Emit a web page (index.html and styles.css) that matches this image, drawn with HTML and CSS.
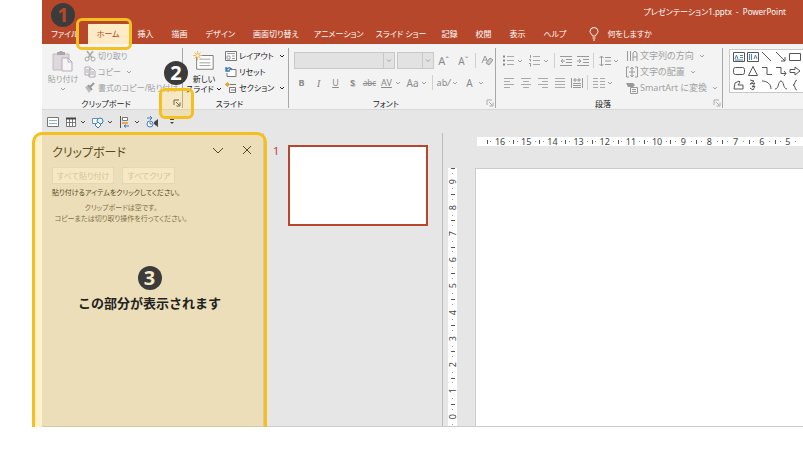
FILE: index.html
```html
<!DOCTYPE html>
<html lang="ja">
<head>
    <meta charset="UTF-8">
    <meta name="viewport" content="width=device-width, initial-scale=1.0">
    <title>プレゼンテーション1.pptx - PowerPoint</title>
    <link rel="stylesheet" href="styles.css">
</head>
<body>
    <!-- icon sprites -->
    <svg class="sprites" aria-hidden="true">
        <symbol id="chev" viewBox="0 0 6 6"><path d="M1 2l2 2 2-2" fill="none" stroke="currentColor"/></symbol>
        <symbol id="launch" viewBox="0 0 8 8"><path d="M1 6V1h5M3 3l3 3M7 3.500V7H3.500" fill="none" stroke="currentColor"/></symbol>
        <symbol id="paste" viewBox="0 0 22 22"><path d="M1 4h16v16H1z" fill="#dcd8dc" stroke="#c2bcc2"/><path d="M5 5V2h2l1-1h2l1 1h2v3z" fill="#aaa6aa"/><path d="M10 8h6l4 4v9H10z" fill="#f7f4f7" stroke="#b5aeb5"/><path d="M16 8v4h4" fill="none" stroke="#b5aeb5"/></symbol>
        <symbol id="cut" viewBox="0 0 12 12"><path d="M3 1l5 7M9 1L4 8" stroke="#aaa" stroke-width="1.500"/><circle cx="3" cy="9" r="2" fill="none" stroke="#aaa"/><circle cx="9" cy="9" r="2" fill="none" stroke="#aaa"/></symbol>
        <symbol id="copy" viewBox="0 0 12 12"><path d="M1 1h5v8H1zM5 3h4l2 2v6H5z" fill="#f3f3f3" stroke="#b2acb2"/><path d="M2 4h2M2 6h2M7 6h3M7 8h3" stroke="#b2acb2"/></symbol>
        <symbol id="brush" viewBox="0 0 12 12"><path d="M1 5l4-2 3 4-3 4z" fill="#bbb"/><path d="M6 5l4-4M4 3l4 5" stroke="#999" stroke-width="2"/></symbol>
        <symbol id="newslide" viewBox="0 0 24 22"><path d="M4 5h18v15H4z" fill="#fff" stroke="#777"/><path d="M7 9h12M7 13h12M7 16h12" stroke="#999"/><path d="M5 0v10M0 5h10M1.500 1.500l7 7M8.500 1.500l-7 7" stroke="#eeb85f"/><circle cx="5" cy="5" r="2" fill="#fff6dc" stroke="#eeb85f"/></symbol>
        <symbol id="layout" viewBox="0 0 12 12"><path d="M.5 1.500h11v9H.5z" fill="#fff" stroke="#777"/><path d="M2 3.500h8M2 6h3v3H2zM7 6h3M7 8.500h3" fill="none" stroke="#999"/></symbol>
        <symbol id="reset" viewBox="0 0 12 12"><path d="M4 3.500h7v7H2V7" fill="#fff" stroke="#777"/><path d="M1 1v4h4M1 5c1-4 5-4 6-1" fill="none" stroke="#2e76b5" stroke-width="1.300"/></symbol>
        <symbol id="section" viewBox="0 0 12 12"><path d="M5 2.500h6M4.500 5.500h6v5h-6zM6 8h4" fill="#fff" stroke="#777"/><path d="M2.500 0v5M0 2.500h5M1 1l3 3M4 1L1 4" stroke="#e8a33d"/></symbol>
        <symbol id="eraser" viewBox="0 0 12 12"><path d="M1 8l3-7 3 6M2 5h4" fill="none" stroke="#999"/><path d="M5 8l4-5 3 2-4 5z" fill="#ccc" stroke="#999"/></symbol>
        <symbol id="bullets" viewBox="0 0 12 12"><path d="M4 1.500h7M4 5.500h7M4 9.500h7" stroke="#aaa"/><path d="M0 1.500h2M0 5.500h2M0 9.500h2" stroke="#888" stroke-width="2"/></symbol>
        <symbol id="numbers" viewBox="0 0 12 12"><path d="M4 1.500h7M4 5.500h7M4 9.500h7" stroke="#aaa"/><path d="M1.500 0v3M0 4.500h1.500v2M0 8.500h1.500v3" fill="none" stroke="#999"/></symbol>
        <symbol id="outdent" viewBox="0 0 12 12"><path d="M0 1.500h12M6 4.500h6M6 7.500h6M0 10.500h12M5 6H1M3 4L1 6l2 2" fill="none" stroke="#999"/></symbol>
        <symbol id="indent" viewBox="0 0 12 12"><path d="M0 1.500h12M6 4.500h6M6 7.500h6M0 10.500h12M0 6h4M2 4l2 2-2 2" fill="none" stroke="#999"/></symbol>
        <symbol id="spacing" viewBox="0 0 12 12"><path d="M6 2.500h6M6 6h6M6 9.500h6M2.500 1v10M.5 3l2-2 2 2M.5 9l2 2 2-2" fill="none" stroke="#999"/></symbol>
        <symbol id="left" viewBox="0 0 12 12"><path d="M1 1.500h10M1 4.500h6M1 7.500h10M1 10.500h6" stroke="#aaa"/></symbol>
        <symbol id="center" viewBox="0 0 12 12"><path d="M1 1.500h10M3 4.500h6M1 7.500h10M3 10.500h6" stroke="#aaa"/></symbol>
        <symbol id="right" viewBox="0 0 12 12"><path d="M1 1.500h10M5 4.500h6M1 7.500h10M5 10.500h6" stroke="#aaa"/></symbol>
        <symbol id="justify" viewBox="0 0 12 12"><path d="M1 1.500h10M1 4.500h10M1 7.500h10M1 10.500h10" stroke="#aaa"/></symbol>
        <symbol id="distribute" viewBox="0 0 12 12"><path d="M.5 1v10M11.500 1v10M2 6.500h8M2 8.500h8M2 10.500h8M4 1v4M8 1v4M2 3h8" stroke="#999"/></symbol>
        <symbol id="columns" viewBox="0 0 12 12"><path d="M0 1.500h5M0 4.500h5M0 7.500h5M0 10.500h5M7 1.500h5M7 4.500h5M7 7.500h5M7 10.500h5" stroke="#aaa"/></symbol>
        <symbol id="direction" viewBox="0 0 12 12"><path d="M1.500 1v10M4.500 1v10M7 11V3l2-2 2 2v8M7 7h4" fill="none" stroke="#999"/></symbol>
        <symbol id="valign" viewBox="0 0 12 12"><path d="M3 1H.5v10H3M9 1h2.500v10H9M6 1v10M4.500 3L6 1l1.500 2M4.500 9L6 11l1.500-2M3 6h6" fill="none" stroke="#999"/></symbol>
        <symbol id="smartart" viewBox="0 0 12 12"><path d="M0 1h7l2 2-2 2H2z" fill="#999"/><path d="M4.500 5.500h7v6h-7zM6 7.500h4M6 9.500h4" fill="#f3f3f3" stroke="#999"/></symbol>
        <symbol id="bulb" viewBox="0 0 10 14"><path d="M3.500 9C3.500 7.500 1 6.500 1 4.500a4 4 0 018 0C9 6.500 6.500 7.500 6.500 9zM3.500 11h3M4 13h2" fill="none" stroke="#fff"/></symbol>
        <symbol id="qslide" viewBox="0 0 12 12"><path d="M.5 1.500h11v9H.5z" fill="#fff" stroke="#777"/><path d="M2 4.500h8M2 7.500h8" stroke="#8fb0cf"/></symbol>
        <symbol id="qtable" viewBox="0 0 12 12"><path d="M1.500 2.500h9v8h-9zM4.500 3v7M7.500 3v7M2 6.500h8" fill="#fff" stroke="#777"/><path d="M1 2.500h10" stroke="#444" stroke-width="2"/></symbol>
        <symbol id="qshapes" viewBox="0 0 12 12"><path d="M.5 2.500h6v5h-6z" fill="#fff" stroke="#5b8fc0"/><circle cx="8" cy="5" r="3" fill="#eaf2fa" stroke="#3c7fbd"/><path d="M6 6l3 3-3 3-3-3z" fill="#fff" stroke="#3c7fbd"/></symbol>
        <symbol id="qalign" viewBox="0 0 12 12"><path d="M1.500 0v12" stroke="#555"/><path d="M3.500 1.500h5v3h-5z" fill="#fff" stroke="#777"/><path d="M3 6h6v2H3z" fill="#f0a64b"/><path d="M10 10H5M7 8.500L5 10l2 1.500" fill="none" stroke="#3c7fbd"/></symbol>
        <symbol id="qanim" viewBox="0 0 12 12"><circle cx="4" cy="8" r="3" fill="#fff" stroke="#3c7fbd"/><path d="M4 6v2h2M1 2h5M4 0l2 2-2 2" fill="none" stroke="#3c7fbd"/><path d="M12 3v8L8 8V6z" fill="#444"/></symbol>
        <symbol id="qmore" viewBox="0 0 6 6"><path d="M1 .5h4" stroke="#444"/><path d="M1 3h4L3 5z" fill="#444"/></symbol>
        <symbol id="s-text" viewBox="0 0 12 12"><path d="M.5 1.500h11v9H.5z" fill="#fff" stroke="#555"/><path d="M2 8l1.500-4L5 8M7 4.500h3M7 6.500h3M2 9h8" fill="none" stroke="#4f7fae"/></symbol>
        <symbol id="s-vtext" viewBox="0 0 12 12"><path d="M.5 1.500h11v9H.5z" fill="#fff" stroke="#555"/><path d="M2.500 3v6M4.500 3v6M7 8l1.500-4L10 8" fill="none" stroke="#4f7fae"/></symbol>
        <symbol id="s-line" viewBox="0 0 12 12"><path d="M1 1l9 9" stroke="#555"/></symbol>
        <symbol id="s-arrow" viewBox="0 0 12 12"><path d="M1 1l9 9M10 6v4H6" fill="none" stroke="#555"/></symbol>
        <symbol id="s-rect" viewBox="0 0 12 12"><path d="M.5 2.500h11v7H.5z" fill="none" stroke="#555"/></symbol>
        <symbol id="s-round" viewBox="0 0 12 12"><rect x=".5" y="2.500" width="11" height="7" rx="2" fill="none" stroke="#555"/></symbol>
        <symbol id="s-tri" viewBox="0 0 12 12"><path d="M6 1.500l4.500 9h-9z" fill="none" stroke="#555"/></symbol>
        <symbol id="s-elbow" viewBox="0 0 12 12"><path d="M1 2.500h5v7h5" fill="none" stroke="#555"/></symbol>
        <symbol id="s-elbowarrow" viewBox="0 0 12 12"><path d="M1 2.500h5v6h5M9 6l2 2.500L9 11" fill="none" stroke="#555"/></symbol>
        <symbol id="s-block" viewBox="0 0 12 12"><path d="M1 4.500h5V2l5 4-5 4V7.500H1z" fill="none" stroke="#555"/></symbol>
        <symbol id="s-free" viewBox="0 0 12 12"><path d="M1 10L2 4l4-2 1 1-2 3h5v4z" fill="none" stroke="#555"/></symbol>
        <symbol id="s-scribble" viewBox="0 0 12 12"><path d="M3 1l4 1-4 3 5-1-3 4 3-1-2 4-3-2" fill="none" stroke="#555"/></symbol>
        <symbol id="s-arc" viewBox="0 0 12 12"><path d="M1 2c5 0 9 3 9 8" fill="none" stroke="#555"/></symbol>
        <symbol id="s-curve" viewBox="0 0 12 12"><path d="M0 10C4 10 3 2 6 2s2 8 6 8" fill="none" stroke="#555"/></symbol>
        <symbol id="s-brace" viewBox="0 0 12 12"><path d="M8 1C5 1 7 6 4 6c3 0 1 5 4 5" fill="none" stroke="#555"/></symbol>
        <symbol id="down" viewBox="0 0 12 12"><path d="M1 4l5 5 5-5" fill="none" stroke="currentColor"/></symbol>
        <symbol id="close" viewBox="0 0 12 12"><path d="M2 2l8 8M10 2l-8 8" stroke="currentColor"/></symbol>
    </svg>

    <div class="app">
        <header class="titlebar">
            <div class="doc-title">プレゼンテーション1.pptx &nbsp;-&nbsp; PowerPoint</div>
            <nav class="tabs">
                <button class="tab">ファイル</button>
                <button class="tab active">ホーム</button>
                <button class="tab">挿入</button>
                <button class="tab">描画</button>
                <button class="tab">デザイン</button>
                <button class="tab">画面切り替え</button>
                <button class="tab long">アニメーション</button>
                <button class="tab long">スライド ショー</button>
                <button class="tab">記録</button>
                <button class="tab">校閲</button>
                <button class="tab">表示</button>
                <button class="tab">ヘルプ</button>
                <button class="tab tell-me"><svg class="bulb"><use href="#bulb"/></svg>何をしますか</button>
            </nav>
        </header>

        <div class="ribbon">
            <section class="group group-clipboard">
                <div class="group-body">
                    <button class="big-btn disabled"><svg class="big-icon"><use href="#paste"/></svg><span>貼り付け</span><svg class="chev"><use href="#chev"/></svg></button>
                    <div class="stack disabled">
                        <button><svg class="icon"><use href="#cut"/></svg>切り取り</button>
                        <button><svg class="icon"><use href="#copy"/></svg>コピー <svg class="chev"><use href="#chev"/></svg></button>
                        <button><svg class="icon"><use href="#brush"/></svg>書式のコピー/貼り付け</button>
                    </div>
                </div>
                <footer><span>クリップボード</span><button class="launcher dark" aria-label="クリップボードの表示"><svg><use href="#launch"/></svg></button></footer>
            </section>

            <section class="group group-slide">
                <div class="group-body">
                    <button class="big-btn"><svg class="big-icon"><use href="#newslide"/></svg><span>新しい</span><span>スライド<svg class="chev"><use href="#chev"/></svg></span></button>
                    <div class="stack">
                        <button><svg class="icon"><use href="#layout"/></svg>レイアウト<svg class="chev"><use href="#chev"/></svg></button>
                        <button><svg class="icon"><use href="#reset"/></svg>リセット</button>
                        <button><svg class="icon"><use href="#section"/></svg>セクション<svg class="chev"><use href="#chev"/></svg></button>
                    </div>
                </div>
                <footer><span>スライド</span></footer>
            </section>

            <section class="group group-font disabled">
                <div class="group-rows">
                    <div class="row">
                        <div class="combo combo-font"><select aria-label="フォント"><option></option></select><svg class="chev"><use href="#chev"/></svg></div>
                        <div class="combo combo-size"><select aria-label="フォント サイズ"><option></option></select><svg class="chev"><use href="#chev"/></svg></div>
                        <button class="tool grow">A<sup>ˆ</sup></button>
                        <button class="tool shrink">A<sup>ˇ</sup></button>
                        <span class="sep"></span>
                        <button class="tool" aria-label="書式のクリア"><svg class="icon"><use href="#eraser"/></svg></button>
                    </div>
                    <div class="row">
                        <button class="tool bold">B</button>
                        <button class="tool italic">I</button>
                        <button class="tool underline">U</button>
                        <button class="tool shadow">S</button>
                        <button class="tool strike">abc</button>
                        <button class="tool underline">AV</button>
                        <svg class="chev"><use href="#chev"/></svg>
                        <button class="tool case">Aa</button>
                        <svg class="chev"><use href="#chev"/></svg>
                        <span class="sep"></span>
                        <button class="tool marker">ab<i>/</i></button>
                        <svg class="chev"><use href="#chev"/></svg>
                        <button class="tool color">A</button>
                        <svg class="chev"><use href="#chev"/></svg>
                    </div>
                </div>
                <footer><span>フォント</span><button class="launcher" aria-label="フォントの設定"><svg><use href="#launch"/></svg></button></footer>
            </section>

            <section class="group group-para disabled">
                <div class="group-body">
                    <div class="group-rows">
                        <div class="row">
                            <button class="tool" aria-label="箇条書き"><svg class="icon"><use href="#bullets"/></svg></button><svg class="chev"><use href="#chev"/></svg>
                            <button class="tool" aria-label="段落番号"><svg class="icon"><use href="#numbers"/></svg></button><svg class="chev"><use href="#chev"/></svg>
                            <span class="sep"></span>
                            <button class="tool" aria-label="インデントを減らす"><svg class="icon"><use href="#outdent"/></svg></button>
                            <button class="tool" aria-label="インデントを増やす"><svg class="icon"><use href="#indent"/></svg></button>
                            <span class="sep"></span>
                            <button class="tool" aria-label="行間"><svg class="icon"><use href="#spacing"/></svg></button><svg class="chev"><use href="#chev"/></svg>
                        </div>
                        <div class="row">
                            <button class="tool" aria-label="左揃え"><svg class="icon"><use href="#left"/></svg></button>
                            <button class="tool" aria-label="中央揃え"><svg class="icon"><use href="#center"/></svg></button>
                            <button class="tool" aria-label="右揃え"><svg class="icon"><use href="#right"/></svg></button>
                            <button class="tool" aria-label="両端揃え"><svg class="icon"><use href="#justify"/></svg></button>
                            <button class="tool" aria-label="均等割り付け"><svg class="icon"><use href="#distribute"/></svg></button>
                            <span class="sep"></span>
                            <button class="tool" aria-label="段組み"><svg class="icon"><use href="#columns"/></svg></button><svg class="chev"><use href="#chev"/></svg>
                        </div>
                    </div>
                    <div class="stack">
                        <button><svg class="icon"><use href="#direction"/></svg>文字列の方向<svg class="chev"><use href="#chev"/></svg></button>
                        <button><svg class="icon"><use href="#valign"/></svg>文字の配置<svg class="chev"><use href="#chev"/></svg></button>
                        <button><svg class="icon"><use href="#smartart"/></svg>SmartArt に変換<svg class="chev"><use href="#chev"/></svg></button>
                    </div>
                </div>
                <footer><span>段落</span><button class="launcher" aria-label="段落の設定"><svg><use href="#launch"/></svg></button></footer>
            </section>

            <section class="group group-draw">
                <div class="gallery">
                    <svg><use href="#s-text"/></svg><svg><use href="#s-vtext"/></svg><svg><use href="#s-line"/></svg><svg><use href="#s-arrow"/></svg><svg><use href="#s-rect"/></svg>
                    <svg><use href="#s-round"/></svg><svg><use href="#s-tri"/></svg><svg><use href="#s-elbow"/></svg><svg><use href="#s-elbowarrow"/></svg><svg><use href="#s-block"/></svg>
                    <svg><use href="#s-free"/></svg><svg><use href="#s-scribble"/></svg><svg><use href="#s-arc"/></svg><svg><use href="#s-curve"/></svg><svg><use href="#s-brace"/></svg>
                </div>
            </section>
        </div>

        <div class="quickbar">
            <button aria-label="スライド"><svg class="icon"><use href="#qslide"/></svg></button>
            <button aria-label="表"><svg class="icon"><use href="#qtable"/></svg><svg class="chev"><use href="#chev"/></svg></button>
            <button aria-label="図形"><svg class="icon"><use href="#qshapes"/></svg><svg class="chev"><use href="#chev"/></svg></button>
            <button aria-label="配置"><svg class="icon"><use href="#qalign"/></svg><svg class="chev"><use href="#chev"/></svg></button>
            <button aria-label="アニメーション"><svg class="icon"><use href="#qanim"/></svg></button>
            <button class="more" aria-label="カスタマイズ"><svg class="chev"><use href="#qmore"/></svg></button>
        </div>

        <main class="workspace">
            <aside class="clip-pane">
                <div class="pane-head">
                    <h2>クリップボード</h2>
                    <button aria-label="オプション"><svg class="icon"><use href="#down"/></svg></button>
                    <button aria-label="閉じる"><svg class="icon"><use href="#close"/></svg></button>
                </div>
                <div class="pane-actions">
                    <button>すべて貼り付け</button>
                    <button>すべてクリア</button>
                </div>
                <p class="hint">貼り付けるアイテムをクリックしてください。</p>
                <p class="empty">クリップボードは空です。<br>コピーまたは切り取り操作を行ってください。</p>
            </aside>
            <div class="thumbs">
                <span class="thumb-no">1</span>
                <div class="thumb"></div>
            </div>
            <div class="editor">
                <div class="ruler ruler-h">
                    <span>16</span><span>15</span><span>14</span><span>13</span><span>12</span><span>11</span><span>10</span><span>9</span><span>8</span><span>7</span><span>6</span><span>5</span>
                </div>
                <div class="ruler ruler-v">
                    <span><b>9</b></span><span><b>8</b></span><span><b>7</b></span><span><b>6</b></span><span><b>5</b></span><span><b>4</b></span><span><b>3</b></span><span><b>2</b></span><span><b>1</b></span><span><b>0</b></span>
                </div>
                <div class="slide"></div>
            </div>
        </main>

        <!-- numbered callouts -->
        <div class="callout callout-tab"></div>
        <div class="callout callout-launcher"></div>
        <div class="callout callout-pane">
            <span class="step">3</span>
            <strong>この部分が表示されます</strong>
        </div>
        <span class="step step-1">1</span>
        <span class="step step-2">2</span>
    </div>
</body>
</html>
```
FILE: styles.css
```css
* {
    box-sizing: border-box;
}
body {
    margin: 0;
    height: 100vh;
    padding: 0 0 24px 42px;
    overflow: hidden;
    background: #fff;
    color: #222;
    font-family: "Noto Sans", "Noto Sans CJK JP", sans-serif;
    font-size: 8px;
    line-height: 12px;
    font-feature-settings: "palt";
}
button {
    display: flex;
    align-items: center;
    padding: 0;
    border: none;
    background: none;
    color: inherit;
    font: inherit;
    font-feature-settings: inherit;
    white-space: nowrap;
}
svg {
    flex: none;
}
.sprites {
    position: absolute;
    width: 0;
    height: 0;
}
.icon {
    width: 12px;
    height: 12px;
}
.chev {
    width: 6px;
    height: 6px;
}
.app {
    position: relative;
    display: flex;
    flex-direction: column;
    height: 100%;
}

/* title bar and tabs */
.titlebar {
    background: #b7472a;
    color: #fff;
}
.doc-title {
    height: 24px;
    padding-right: 17px;
    line-height: 24px;
    text-align: right;
}
.tabs {
    display: flex;
    height: 20px;
}
.tab {
    padding: 0 9px;
}
.tab.active {
    background: #fcebc5;
    color: #b7472a;
}
.tab.long {
    padding: 0 6px;
}
.tab.tell-me {
    gap: 8px;
    padding-left: 14px;
}
.bulb {
    width: 10px;
    height: 14px;
}

/* ribbon */
.ribbon {
    display: flex;
    height: 66px;
    background: #f3f3f3;
    border-bottom: 1px solid #d8d8d8;
    overflow: hidden;
}
.group {
    display: flex;
    flex-direction: column;
    flex: none;
    margin: 4px 0 1px;
    border-right: 1px solid #a8a8a8;
}
.group-clipboard {
    width: 141px;
}
.group-slide {
    width: 106px;
}
.group-font {
    width: 207px;
    font-size: 9px;
}
.group-para {
    width: 227px;
    font-size: 9px;
}
.group-draw {
    flex: 1;
    border: none;
    padding: 1px 0 0 6px;
}
.group-body {
    display: flex;
    flex: 1;
}
.group footer {
    position: relative;
    height: 9px;
    padding-right: 12px;
    font-size: 8px;
    line-height: 9px;
    text-align: center;
    color: #222;
}
.launcher {
    position: absolute;
    right: 1px;
    top: 0;
    color: #aaa;
}
.launcher.dark {
    color: #444;
}
.launcher svg {
    width: 8px;
    height: 8px;
}
.disabled {
    color: #a0a0a0;
}
.big-btn {
    flex-direction: column;
    width: 42px;
    line-height: 10px;
}
.big-icon {
    width: 22px;
    height: 22px;
    margin: 2px 0;
}
.big-btn .chev {
    margin: 2px;
}
.big-btn span .chev {
    margin: 0 0 0 2px;
}
.stack button {
    gap: 2px;
    height: 16px;
}
.stack .chev {
    margin-left: 3px;
}
.group-rows {
    flex: 1;
    padding: 4px 0 0 4px;
}
.row {
    display: flex;
    align-items: center;
    height: 17px;
    margin-bottom: 5px;
}
.combo {
    position: relative;
    height: 17px;
    margin: 0 2px 0 1px;
    border: 1px solid #c8c8c8;
    background: #e2e2e2;
}
.combo select {
    appearance: none;
    width: 100%;
    height: 100%;
    border: none;
    background: none;
}
.combo .chev {
    position: absolute;
    right: 0;
    top: 0;
    width: 11px;
    height: 15px;
    padding: 0 2px;
    border-left: 1px solid #c8c8c8;
}
.combo-font {
    width: 103px;
}
.combo-size {
    width: 37px;
    margin: 0;
}
.tool {
    justify-content: center;
    width: 17px;
    height: 17px;
    color: #8a8a8a;
}
.grow,
.shrink {
    width: 20px;
    font-size: 11px;
}
.shrink {
    font-size: 10px;
}
.tool sup {
    font-size: 9px;
    line-height: 9px;
}
.bold,
.shadow {
    font-weight: bold;
}
.italic {
    font-family: "Liberation Serif", serif;
    font-style: italic;
    font-size: 11px;
}
.underline {
    text-decoration: underline;
}
.shadow {
    text-shadow: 1px 1px #ccc;
}
.strike {
    font-size: 8px;
    text-decoration: line-through;
}
.color,
.case {
    font-size: 10px;
}
.row .chev {
    margin-right: 3px;
}
.row .combo .chev {
    margin: 0;
}
.sep {
    width: 1px;
    height: 15px;
    margin: 0 2px;
    background: #d0d0d0;
}
.group-para .group-rows {
    flex: none;
    width: 130px;
}
.gallery {
    display: grid;
    grid-template-columns: repeat(5, 12px);
    grid-auto-rows: 12px;
    gap: 2px;
    width: 90px;
    padding: 1px 3px;
    border: 1px solid #c8c8c8;
    background: #fff;
}
.gallery svg {
    width: 12px;
    height: 12px;
}

/* quick access bar */
.quickbar {
    display: flex;
    gap: 6px;
    height: 23px;
    padding-left: 5px;
    background: #e6e6e6;
}
.quickbar button {
    gap: 3px;
    color: #444;
}
.quickbar .more {
    padding-left: 5px;
}

/* workspace */
.workspace {
    display: flex;
    flex: 1;
    min-height: 0;
    overflow: hidden;
    background: #e6e6e6;
    border-bottom: 1px solid #ccc;
}
.clip-pane {
    width: 222px;
    padding: 10px 10px 0;
    border-right: 1px solid #ccc;
}
.pane-head {
    display: flex;
    gap: 17px;
    height: 20px;
}
.pane-head h2 {
    flex: 1;
    margin: 0;
    font-size: 12px;
    line-height: 20px;
    font-weight: normal;
}
.pane-head button {
    height: 14px;
}
.pane-actions {
    display: flex;
    gap: 8px;
    margin: 4px 0 3px;
}
.pane-actions button {
    height: 17px;
    padding: 0 4px;
    border: 1px solid #ddd;
    background: #f3f3f3;
    color: #c4c4c4;
}
.clip-pane p {
    margin: 0;
    font-size: 7px;
    white-space: nowrap;
}
.clip-pane .empty {
    width: 138px;
    margin-top: 3px;
    line-height: 11px;
    text-align: center;
    color: #555;
}
.thumbs {
    display: flex;
    gap: 9px;
    width: 179px;
    padding: 12px 14px 0 9px;
    border-right: 1px solid #bbb;
}
.thumb-no {
    color: #c43e1c;
    font-size: 11px;
}
.thumb {
    flex: 1;
    height: 81px;
    border: 2px solid #b7472a;
    background: #fff;
}
.editor {
    display: grid;
    grid-template-columns: 9px 1fr;
    grid-template-rows: 9px 1fr;
    gap: 22px 18px;
    flex: 1;
    min-width: 0;
    padding: 4px 0 0 5px;
}
.ruler {
    display: grid;
    background: #fff;
    color: #444;
    font-size: 9px;
    line-height: 9px;
}
.ruler span {
    display: flex;
    align-items: center;
    justify-content: space-evenly;
    background: linear-gradient(#555, #555) left center / 1px 4px no-repeat;
}
.ruler span::before,
.ruler span::after {
    content: "";
    width: 1px;
    height: 1px;
    background: #999;
}
.ruler-h {
    grid-column: 2;
    grid-auto-flow: column;
    grid-auto-columns: 1fr;
    margin-left: 2px;
    padding: 0 2px 0 10px;
}
.ruler-v {
    grid-auto-rows: 1fr;
    margin-bottom: -4px;
}
.ruler-v span {
    flex-direction: column;
    background: linear-gradient(#555, #555) center top / 4px 1px no-repeat;
}
.ruler-v b {
    font-weight: normal;
    writing-mode: vertical-rl;
    transform: rotate(180deg);
}
.slide {
    border: 1px solid #ccc;
    border-width: 1px 0 0 1px;
    background: #fff;
}

/* callouts over the window */
.callout {
    position: absolute;
    border: 3px solid #f3c01f;
    border-radius: 6px;
}
.callout-tab {
    left: 34px;
    top: 18px;
    width: 56px;
    height: 32px;
}
.callout-launcher {
    left: 117px;
    top: 88px;
    width: 35px;
    height: 31px;
    background: rgba(255, 197, 42, 0.24);
}
.callout-pane {
    display: flex;
    flex-direction: column;
    align-items: center;
    gap: 4px;
    left: -10px;
    top: 132px;
    bottom: 0;
    width: 235px;
    padding-top: 131px;
    border-bottom: none;
    border-radius: 10px 10px 0 0;
    background: rgba(255, 197, 42, 0.24);
}
.callout-pane strong {
    font-size: 13px;
    line-height: 18px;
    font-feature-settings: normal;
    white-space: nowrap;
}
.step {
    width: 24px;
    height: 24px;
    border-radius: 50%;
    background: #3b3b3b;
    color: #f6e8c4;
    font-size: 20px;
    font-weight: bold;
    line-height: 24px;
    text-align: center;
}
.step-1,
.step-2 {
    position: absolute;
    left: 9px;
    top: 3px;
    color: #b7472a;
}
.step-2 {
    left: 122px;
    top: 61px;
    color: #fff;
}
```
